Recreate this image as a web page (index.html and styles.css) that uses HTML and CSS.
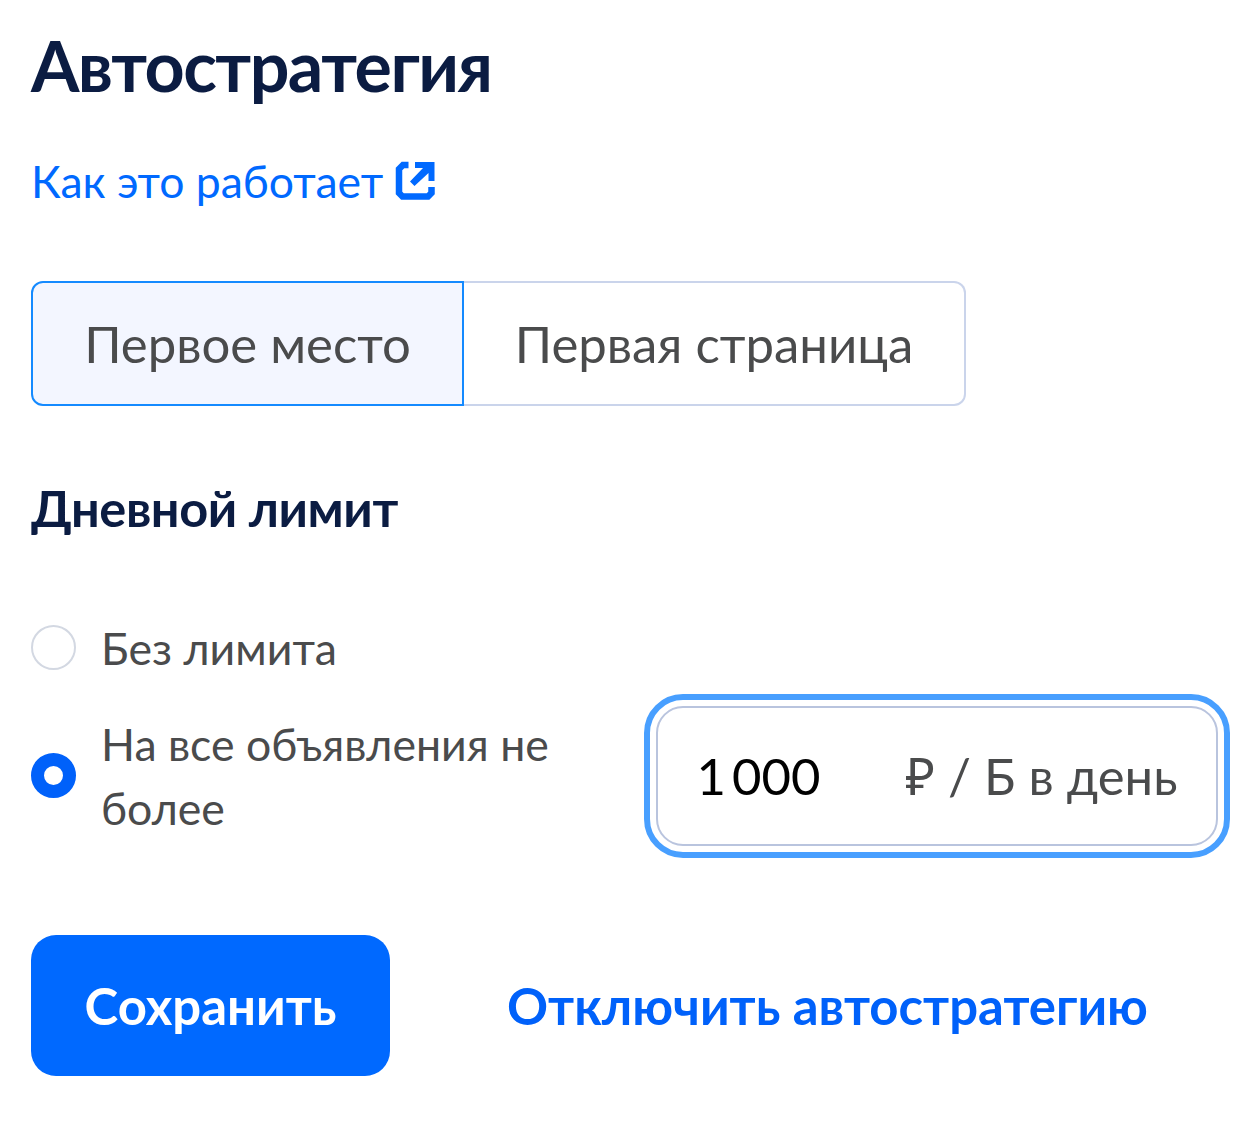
FILE: index.html
```html
<!DOCTYPE html>
<html lang="ru">
<head>
<meta charset="utf-8">
<title>Автостратегия</title>
<link rel="stylesheet" href="styles.css">
</head>
<body>
<main class="panel">
  <h1 class="title"><span>Автостратегия</span></h1>
  <a class="help" href="#"><span class="help-text">Как это работает</span><svg class="help-icon" viewBox="0 0 40 40" aria-hidden="true"><path d="M13.500 4H8L4 8V32L7.500 35.500H33L36.500 32V26"/><path class="fill" d="M20 1H39.500V20H33.500V12L19.500 25L15 20.500L28 7H20Z"/></svg></a>
  <div class="segments">
    <button class="segment active"><span>Первое место</span></button>
    <button class="segment"><span>Первая страница</span></button>
  </div>
  <h2 class="subtitle"><span>Дневной лимит</span></h2>
  <div class="option">
    <i class="radio"></i>
    <span class="label"><span>Без лимита</span></span>
  </div>
  <div class="option limited">
    <i class="radio checked"></i>
    <span class="label">На все объявления не<br>более</span>
    <div class="field">
      <span class="value"><span>1</span><span>000</span></span>
      <span class="unit">₽ / Б в день</span>
    </div>
  </div>
  <div class="actions">
    <button class="save"><span>Сохранить</span></button>
    <button class="disable"><span>Отключить автостратегию</span></button>
  </div>
</main>
</body>
</html>
```
FILE: styles.css
```css
* { box-sizing: border-box; }
body { margin: 0; background: #fff; color: #4a4b4c; font-family: Lato, "Noto Sans", sans-serif; }
button { font: inherit; color: inherit; background: none; border: 0; padding: 0; white-space: nowrap; }
.panel { width: 1260px; height: 1137px; padding: 23px 30px 0 31px; display: flex; flex-direction: column; align-items: flex-start; overflow: hidden; }
.title { margin: 0; font-size: 70px; line-height: 84px; font-weight: 700; letter-spacing: -1.55px; color: #0b1c42; }
.help { margin-top: 42px; display: flex; height: 64px; line-height: 64px; font-size: 44.5px; color: #0069ff; text-decoration: none; white-space: nowrap; }
.help-icon { width: 40px; height: 40px; margin: 12px 0 0 12px; fill: none; stroke: #0069ff; stroke-width: 6.5; }
.help-icon .fill { fill: #0069ff; stroke: none; }
.segments { margin-top: 68px; width: 935px; height: 125px; display: flex; font-size: 50.9px; }
.segment { flex: 1; border: 2px solid #cad4eb; border-left: 0; border-radius: 0 12px 12px 0; }
.segment.active { flex: 0 0 433px; border: 2px solid #148aff; border-radius: 12px 0 0 12px; background: #f3f6ff; }
.subtitle { margin: 70px 0 0; font-size: 50.5px; line-height: 64px; font-weight: 700; color: #0b1c42; letter-spacing: -0.4px; }
.option { margin-top: 76px; display: flex; align-items: center; font-size: 44.6px; line-height: 64px; white-space: nowrap; }
.radio { flex: none; width: 45px; height: 45px; border: 2px solid #d3d8e2; border-radius: 50%; margin: 0 25px 2px 0; }
.radio.checked { border: 13px solid #0061fa; }
.label { flex: none; }
.limited { width: 1186.5px; height: 140px; margin-top: 26px; }
.field { width: 562px; height: 140px; margin-left: auto; padding: 0 38px 0 39px; display: flex; align-items: center; justify-content: space-between; border: 2px solid #b9c4de; border-radius: 27px; outline: 6px solid #489fff; outline-offset: 6px; font-size: 50.8px; }
.value { display: flex; gap: 6px; color: #000; }
.actions { margin-top: 89px; display: flex; align-items: center; font-size: 50.9px; font-weight: 700; }
.save { width: 359px; height: 141px; border-radius: 25px; background: #0069ff; color: #fff; }
.disable { margin-left: 117px; color: #0061fa; }
```
